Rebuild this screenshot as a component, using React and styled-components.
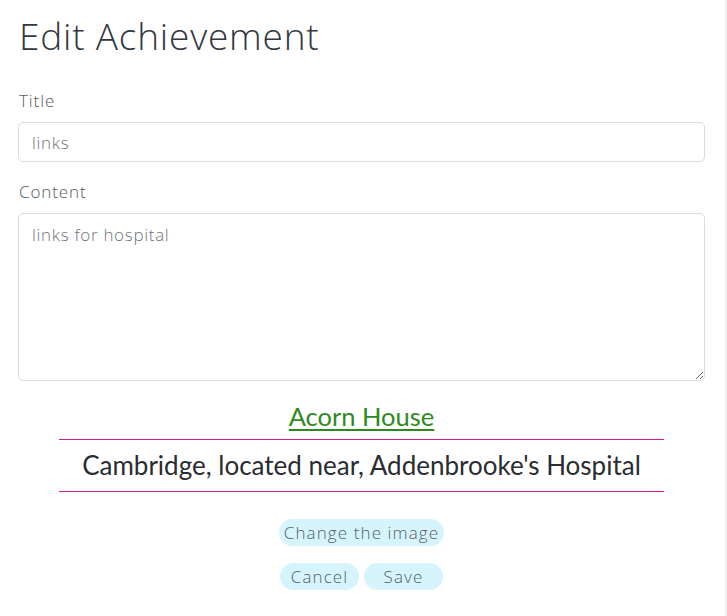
import React from "react"
import styled, { createGlobalStyle } from "styled-components"

const GlobalStyle = createGlobalStyle`
  html, body {
    margin: 0;
    padding: 0;
    background: #ffffff;
  }
  body {
    font-family: "Open Sans", "Liberation Sans", sans-serif;
  }
`

const Page = styled.div`
  box-sizing: border-box;
  min-height: 616px;
  padding: 12px 20px 20px 18px;
  border-right: 2px solid #f1f1f1;
`

const Heading = styled.h1`
  margin: 0 0 30px 1px;
  font-family: "Open Sans", sans-serif;
  font-weight: 300;
  font-size: 37px;
  line-height: 48px;
  color: #333740;
  letter-spacing: 0.8px;
`

const Field = styled.div`
  display: flex;
  flex-direction: column;
  margin-bottom: 19px;
`

const Label = styled.label`
  margin: 0 0 10px 1px;
  font-family: "Open Sans", sans-serif;
  font-weight: 300;
  font-size: 17px;
  line-height: 22px;
  letter-spacing: 0.9px;
  color: #555a60;
`

const inputCss = `
  box-sizing: border-box;
  width: 100%;
  border: 1px solid #d9dce0;
  border-radius: 5px;
  padding: 7px 13px;
  font-family: "Open Sans", sans-serif;
  font-weight: 300;
  font-size: 17px;
  line-height: 24px;
  letter-spacing: 0.7px;
  color: #6d7278;
  background: #fff;
  outline: none;
`

const Input = styled.input`
  ${inputCss}
  height: 40px;
`

const TextArea = styled.textarea`
  ${inputCss}
  height: 168px;
  padding-top: 9px;
  resize: vertical;
  display: block;
`

const Preview = styled.div`
  display: flex;
  flex-direction: column;
  align-items: center;
  margin-top: -1px;
`

const PlaceLink = styled.a`
  font-family: "Lato", "Noto Sans", sans-serif;
  font-size: 25.5px;
  line-height: 34px;
  color: #2e8a1e;
  text-decoration: underline;
  text-decoration-thickness: 2px;
  text-underline-offset: 3px;
  margin-bottom: 6px;
`

const Address = styled.p`
  box-sizing: border-box;
  width: 88%;
  margin: 0;
  padding: 10px 0 11px;
  border-top: 1px solid #d91a96;
  border-bottom: 1px solid #d91a96;
  text-align: center;
  font-family: "Lato", "Noto Sans", sans-serif;
  font-size: 26px;
  line-height: 30px;
  color: #2a2c31;
`

const Actions = styled.div`
  display: flex;
  flex-direction: column;
  align-items: center;
  gap: 17px;
  margin-top: 27px;
`

const Row = styled.div`
  display: flex;
  gap: 5px;
`

const PillButton = styled.button`
  border: none;
  border-radius: 14px;
  background: #d5f4fc;
  height: 27px;
  padding: 0 ${(p) => p.$pad || 6}px;
  min-width: ${(p) => p.$min || 0}px;
  font-family: "Open Sans", sans-serif;
  font-weight: 300;
  font-size: 17px;
  letter-spacing: 1.1px;
  color: #56606a;
  cursor: pointer;
`

export default function App() {
  return (
    <>
      <GlobalStyle />
      <Page>
        <Heading>Edit Achievement</Heading>
        <Field>
          <Label>Title</Label>
          <Input defaultValue="links" />
        </Field>
        <Field>
          <Label>Content</Label>
          <TextArea defaultValue="links for hospital" />
        </Field>
        <Preview>
          <PlaceLink href="#">Acorn House</PlaceLink>
          <Address>Cambridge, located near, Addenbrooke's Hospital</Address>
        </Preview>
        <Actions>
          <PillButton $pad={5}>Change the image</PillButton>
          <Row>
            <PillButton $min={79}>Cancel</PillButton>
            <PillButton $min={79}>Save</PillButton>
          </Row>
        </Actions>
      </Page>
    </>
  )
}
